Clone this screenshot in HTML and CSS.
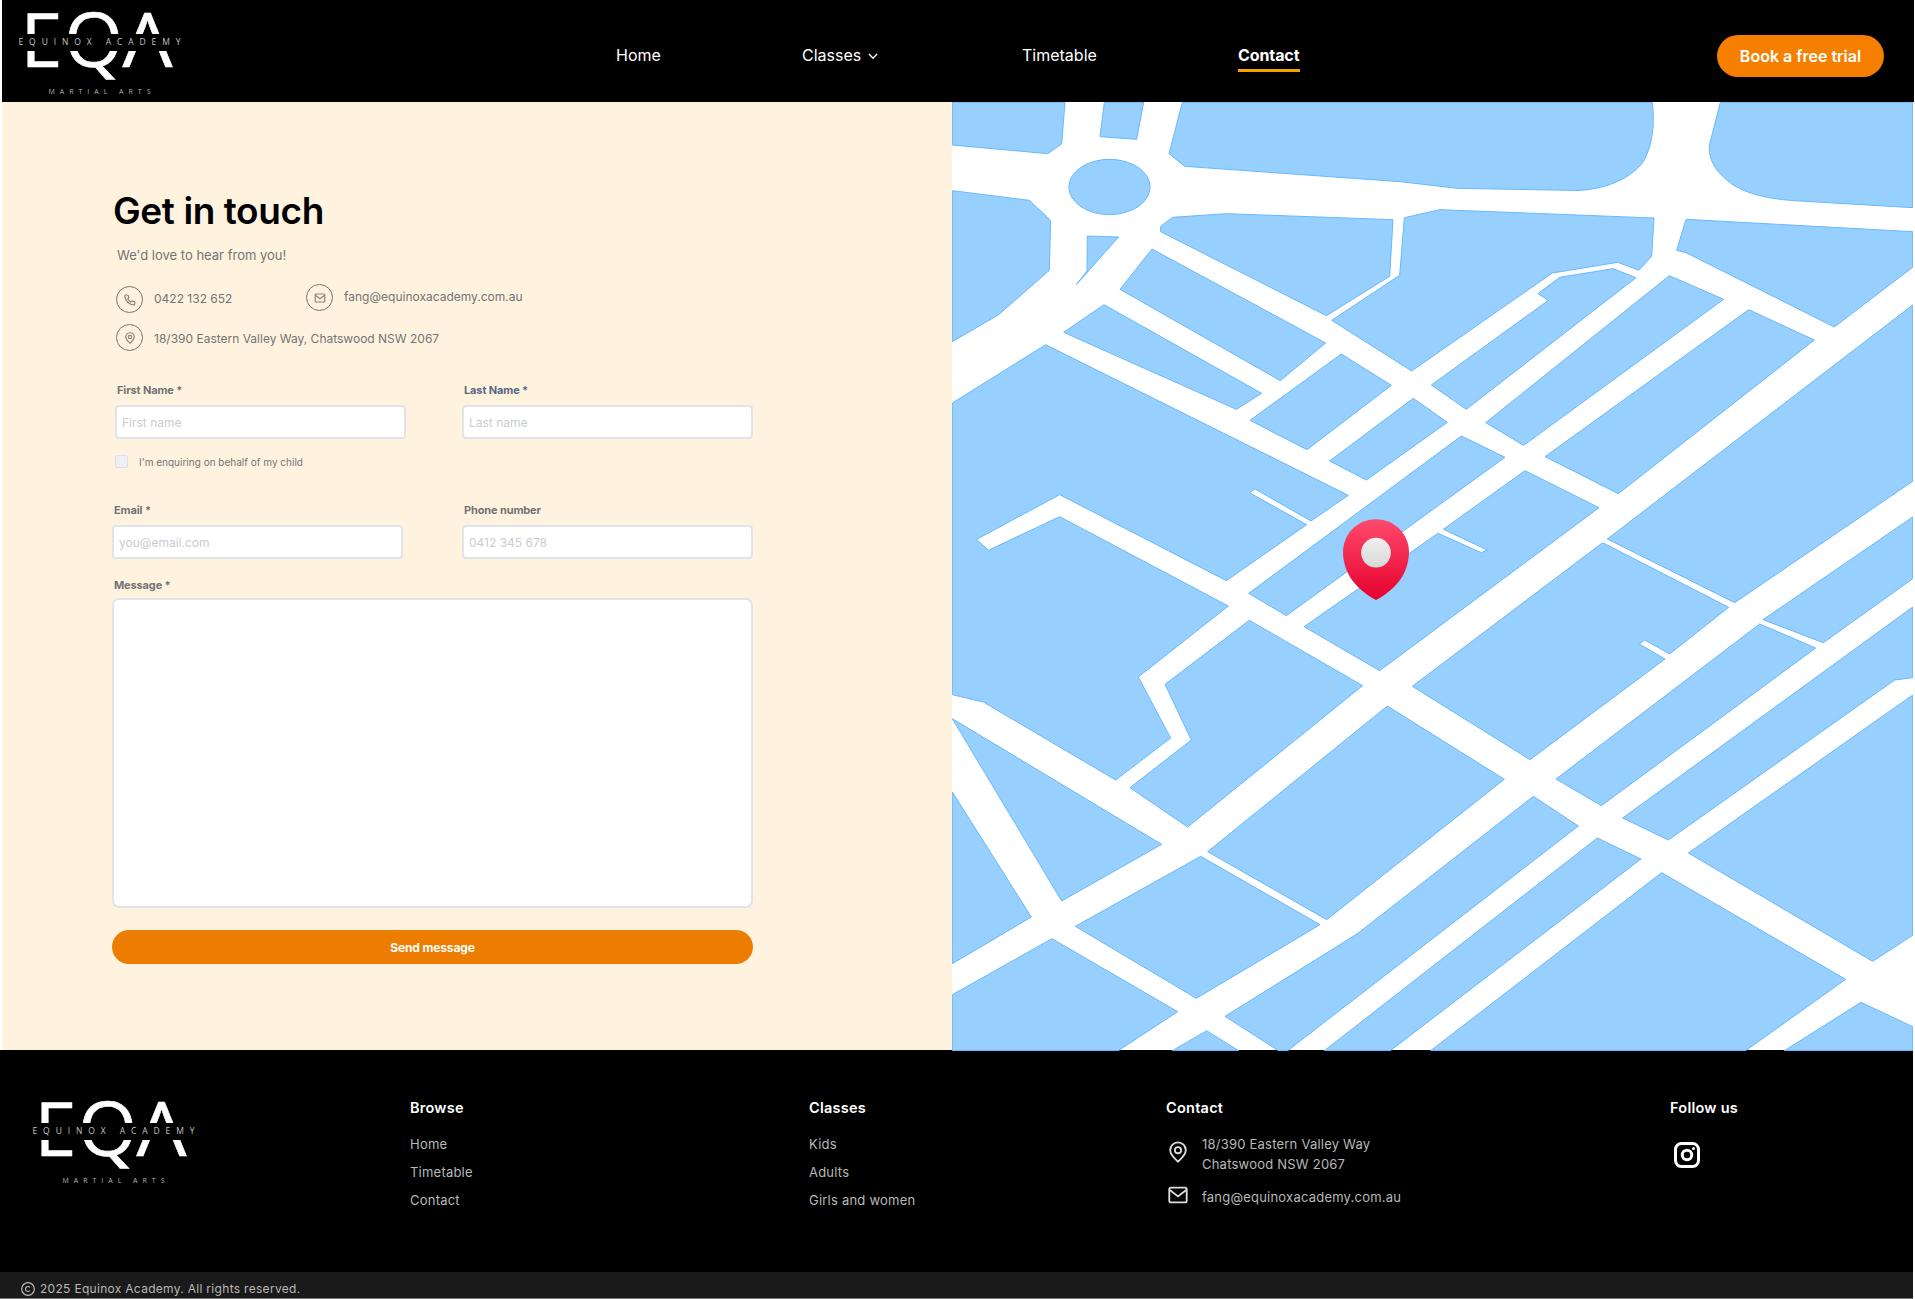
FILE: index.html
```html
<!DOCTYPE html>
<html lang="en">
<head>
<meta charset="utf-8">
<title>Contact | Equinox Academy</title>
<link rel="stylesheet" href="styles.css">
</head>
<body>
<svg class="defs" width="0" height="0" aria-hidden="true">
  <symbol id="logo" viewBox="0 0 184 100" overflow="visible">
    <g class="logo-big">
      <text x="20.5" y="67">E</text>
      <text x="64.3" y="67">Q</text>
      <text x="122.4" y="67" textLength="50" lengthAdjust="spacingAndGlyphs">A</text>
    </g>
    <rect class="logo-band" x="12" y="34" width="170" height="17"/>
    <text class="logo-name" x="18.5" y="45" textLength="162">EQUINOX ACADEMY</text>
    <text class="logo-sub" x="48.5" y="94" textLength="102">MARTIAL ARTS</text>
  </symbol>
  <symbol id="mail" viewBox="0 0 24 24"><rect x="2.5" y="4" width="19" height="16" rx="1.8"/><path d="M3 6.5l9 7 9-7"/></symbol>
  <symbol id="pin" viewBox="0 0 24 24"><path d="M12 22.5C8 18.500 3.500 15 3.500 10a8.500 8.500 0 0 1 17 0c0 5-4.500 8.500-8.500 12.500z"/><circle cx="12" cy="10" r="3.400"/></symbol>
</svg>

<header class="header">
  <svg class="header-logo"><use href="#logo"/></svg>
  <nav class="nav">
    <a>Home</a>
    <a>Classes <svg class="chevron" viewBox="0 0 10 7"><path d="M1 1l4 4.300L9 1"/></svg></a>
    <a>Timetable</a>
    <a class="active">Contact</a>
  </nav>
  <a class="trial">Book a free trial</a>
</header>

<main class="main">
  <section class="contact">
    <h1>Get in touch</h1>
    <p class="intro">We'd love to hear from you!</p>
    <div class="details">
      <div class="detail phone"><span class="ring"><svg viewBox="0 0 24 24"><path d="M21.500 16.900v3a2 2 0 0 1-2.200 2 19.800 19.800 0 0 1-8.600-3.100 19.500 19.500 0 0 1-6-6A19.800 19.800 0 0 1 1.600 4.200a2 2 0 0 1 2-2.200h3a2 2 0 0 1 2 1.700c.1 1 .4 1.900.7 2.800a2 2 0 0 1-.5 2.100L7.600 9.900a16 16 0 0 0 6 6l1.300-1.300a2 2 0 0 1 2.100-.4c.9.3 1.800.6 2.800.7a2 2 0 0 1 1.700 2z"/></svg></span><span>0422 132 652</span></div>
      <div class="detail email"><span class="ring"><svg><use href="#mail"/></svg></span><span>fang@equinoxacademy.com.au</span></div>
      <div class="detail address"><span class="ring"><svg><use href="#pin"/></svg></span><span>18/390 Eastern Valley Way, Chatswood NSW 2067</span></div>
    </div>
    <form class="form">
      <label class="field inset"><span>First Name *</span><input placeholder="First name"></label>
      <label class="field last"><span>Last Name *</span><input placeholder="Last name"></label>
      <label class="child"><span class="box"></span>I'm enquiring on behalf of my child</label>
      <label class="field"><span>Email *</span><input placeholder="you@email.com"></label>
      <label class="field"><span>Phone number</span><input placeholder="0412 345 678"></label>
      <label class="field message"><span>Message *</span><textarea></textarea></label>
      <button type="button" class="send">Send message</button>
    </form>
  </section>

  <svg class="map" viewBox="6 6 2883 2847">
    <defs>
      <linearGradient id="pinRed" x1="0" y1="0" x2="0" y2="1"><stop offset="0" stop-color="#ff4a6b"/><stop offset="1" stop-color="#e6002e"/></linearGradient>
      <linearGradient id="pinDot" x1="0" y1="0" x2="0" y2="1"><stop offset="0" stop-color="#efefef"/><stop offset="1" stop-color="#d9d9d9"/></linearGradient>
    </defs>
    <rect class="roads" x="6" y="6" width="2883" height="2844"/>
    <g class="blocks">
      <path d="M7 7H345L335 132 293 161 7 135Z"/>
      <path d="M463 7H581L560 118 450 110Z"/>
      <path d="M697 7H2107C2115 80 2107 135 2080 185C2040 240 1950 275 1860 271L1522 265 1350 245 704 199 657 161Z"/>
      <ellipse cx="478.500" cy="261" rx="122" ry="83"/>
      <path d="M7 272L238 301 302 361 298 511 146 644 7 725Z"/>
      <path d="M412 408L506 411 379 554 411 513Z"/>
      <path d="M632 379L668 352 829 341 1329 359 1319 529 1129 647 632 395Z"/>
      <path d="M606 447L1127 729 991 842 510 568Z"/>
      <path d="M462 614L935 880 859 928 341 697Z"/>
      <path d="M1363 353L1470 329 2112 354 2105 469 2067 511 2003 487 1807 519 1385 813 1145 661 1349 526Z"/>
      <path d="M1174 762L1324 856 1071 1049 900 961Z"/>
      <path d="M1390 895L1492 967 1249 1140 1139 1083Z"/>
      <path d="M1444 855L1795 601 1764 581 1829 532 1989 506 2058 533 1549 928Z"/>
      <path d="M2158 527L2321 598 1721 1036 1607 968Z"/>
      <path d="M2396 629L2593 720 2005 1181 1785 1070Z"/>
      <path d="M2311 7H2888V323L2550 303C2450 298 2390 280 2350 255C2300 220 2272 180 2279 132Z"/>
      <path d="M2208 358L2888 395V502L2653 681 2208 458 2180 451Z"/>
      <path d="M287 734L1195 1186 1083 1263 915 1167 898 1178 1070 1274 829 1442 329 1184 80 1318 115 1351 329 1250 835 1518 565 1731 662 1914 497 2040 100 1806 7 1784V909Z"/>
      <path d="M1534 1008L1665 1072 1009 1547 896 1480Z"/>
      <path d="M1725 1112L1947 1223 1289 1712 1062 1580 1464 1300 1594 1358 1612 1350 1480 1288Z"/>
      <path d="M2888 615V1144L2354 1508 1972 1317Z"/>
      <path d="M1958 1328L2336 1522 2159 1662 2084 1620 2068 1632 2145 1677 1740 1979 1387 1759Z"/>
      <path d="M898 1561L1238 1757 713 2181 540 2063 724 1920 645 1753Z"/>
      <path d="M1312 1818L1663 2038 1130 2459 773 2255Z"/>
      <path d="M7 1856L635 2233 335 2403Z"/>
      <path d="M7 2076L244 2451 7 2591Z"/>
      <path d="M752 2269L1110 2474 739 2695 376 2479Z"/>
      <path d="M306 2516L683 2735 505 2852H7V2684Z"/>
      <path d="M770 2792L866 2852H667Z"/>
      <path d="M1750 2089L1885 2178 1013 2852H985L825 2749 1221 2502Z"/>
      <path d="M1942 2214L2073 2277 1321 2852H1123Z"/>
      <path d="M2135 2318L2687 2638 2387 2852H1442Z"/>
      <path d="M2733 2707L2888 2780V2852H2503Z"/>
      <path d="M2888 1785V2506L2768 2584 2215 2259Z"/>
      <path d="M2429 1572L2597 1644 1954 2117 1818 2037Z"/>
      <path d="M2888 1521V1733L2834 1740 2155 2220 2018 2154Z"/>
      <path d="M2888 1251V1436L2620 1628 2439 1559Z"/>
    </g>
    <path fill="url(#pinRed)" d="M1278 1258C1222 1258 1179 1302 1179 1358C1181 1420 1216 1466 1278 1500C1340 1466 1375 1420 1377 1358C1377 1302 1334 1258 1278 1258Z"/>
    <circle fill="url(#pinDot)" cx="1278" cy="1358" r="44.500"/>
  </svg>
</main>

<footer class="footer">
  <div class="footer-main">
    <svg class="footer-logo"><use href="#logo"/></svg>
    <div class="col"><h2>Browse</h2><a>Home</a><a>Timetable</a><a>Contact</a></div>
    <div class="col"><h2>Classes</h2><a>Kids</a><a>Adults</a><a>Girls and women</a></div>
    <div class="col">
      <h2>Contact</h2>
      <div class="place"><svg><use href="#pin"/></svg><address>18/390 Eastern Valley Way<br>Chatswood NSW 2067</address></div>
      <div class="place mailto"><svg><use href="#mail"/></svg><a>fang@equinoxacademy.com.au</a></div>
    </div>
    <div class="col social">
      <h2>Follow us</h2>
      <svg class="instagram" viewBox="0 0 26 26"><rect x="1.500" y="1.500" width="23" height="23" rx="6"/><circle cx="13" cy="13" r="4.700"/><circle class="dot" cx="19.500" cy="6.500" r="1.500"/></svg>
    </div>
  </div>
  <div class="legal">
    <svg class="copy" viewBox="0 0 14 14"><circle cx="7" cy="7" r="6.300"/><path d="M9 5.500a2.500 2.500 0 1 0 0 3"/></svg>
    <span>2025 Equinox Academy. All rights reserved.</span>
  </div>
</footer>
</body>
</html>
```
FILE: styles.css
```css
* { box-sizing: border-box; }
body {
  margin: 0;
  background: #fff;
  font-family: Inter, "Liberation Sans", sans-serif;
  color: #737373;
  overflow: hidden;
}
h1, h2, p { margin: 0; }
svg { flex: none; display: block; }
.defs { position: absolute; }

/* Logo */
.logo-big { font: 400 75.500px "Open Sans", "Noto Sans", sans-serif; fill: #fff; stroke: #fff; stroke-width: 0.6; }
.logo-band { fill: #000; }
.logo-name { font: 400 8.500px "Open Sans", sans-serif; fill: #c4c4c4; }
.logo-sub { font: 400 7px "Open Sans", sans-serif; fill: #b4b4b4; }

/* Header */
.header {
  display: flex;
  align-items: center;
  height: 102px;
  margin: 0 1px 0 2px;
  background: #000;
}
.header-logo { width: 184px; height: 100px; margin-left: -2px; align-self: flex-start; overflow: visible; }
.nav {
  display: grid;
  grid-template-columns: 186px 220px 216px auto;
  margin: 12px 0 0 432px;
  color: #fff;
  font-size: 16px;
  line-height: 24px;
}
.nav a { display: flex; height: 29px; align-items: flex-start; }
.nav .active { width: 62px; font-weight: 700; letter-spacing: -0.1px; border-bottom: 3px solid #f6a200; }
.chevron { width: 10px; height: 7px; margin: 10px 0 0 7px; fill: none; stroke: #fff; stroke-width: 1.4; }
.trial {
  display: flex;
  align-items: center;
  justify-content: center;
  width: 167px;
  height: 42px;
  margin: 10px 30px 0 auto;
  border-radius: 21px;
  background: #f77f00;
  color: #fff;
  font-weight: 600;
  font-size: 16px;
}

/* Contact panel */
.main {
  display: flex;
  height: 948px;
  margin-left: 2px;
}
.contact {
  width: 950px;
  padding: 86px 0 0 110px;
  background: #fff3e0;
}
h1 {
  padding: 1px 0 0 1px;
  color: #000;
  font-size: 37px;
  line-height: 43px;
  font-weight: 600;
  letter-spacing: -0.4px;
}
.intro { margin: 13px 0 19px 5px; font-size: 13px; line-height: 20px; }
.details {
  display: grid;
  grid-template-columns: 190px auto;
  row-gap: 11px;
  margin: 0 0 33px 4px;
  padding-top: 2px;
  font-size: 12px;
}
.detail { display: flex; gap: 11px; height: 27px; line-height: 26px; }
.email { margin-top: -2px; }
.address { grid-column: 1 / 3; line-height: 29px; }
.ring {
  display: grid;
  place-items: center;
  width: 27px;
  height: 27px;
  border: 1px solid #7c7166;
  border-radius: 50%;
}
.ring svg { width: 12px; height: 12px; fill: none; stroke: #8d857a; stroke-width: 2.4; }

.form {
  display: grid;
  grid-template-columns: 291px 291px;
  column-gap: 59px;
  width: 641px;
}
.field { display: grid; gap: 9px; font-size: 11px; line-height: 12px; font-weight: 700; letter-spacing: -0.13px; }
.field span { padding-left: 2px; }
.inset { margin: 0 -3px 0 3px; }
.last span { color: #5a6785; }
input, textarea {
  display: block;
  width: 100%;
  height: 34px;
  padding: 0 5px;
  border: 2px solid #dfe3ea;
  border-radius: 4px;
  background: #fff;
  font: 400 12px Inter, sans-serif;
}
input::placeholder { color: #c9ccd3; opacity: 1; }
.child {
  display: flex;
  grid-column: 1 / 3;
  gap: 11px;
  margin: 15px 0 34px 3px;
  font-size: 10px;
  line-height: 16px;
}
.box { width: 13px; height: 13px; margin-top: 1px; border: 1px solid #dcdfe9; border-radius: 2px; background: #eff0f6; }
.message { grid-column: 1 / 3; gap: 7px; margin-top: 20px; }
textarea { height: 310px; border-radius: 7px; resize: none; }
.send {
  grid-column: 1 / 3;
  height: 34px;
  margin-top: 22px;
  border: 0;
  border-radius: 17px;
  background: #ed7d00;
  color: #fff;
  font: 700 12px Inter, sans-serif;
  letter-spacing: -0.15px;
}

/* Map */
.map { position: relative; width: 961px; height: 949px; }
.roads { fill: #fff; }
.blocks { fill: #97d0ff; stroke: #69b8fb; stroke-width: 3; }

/* Footer */
.footer { width: 1913px; background: #000; color: #b8b8b8; }
.footer-main {
  display: grid;
  grid-template-columns: 396px 399px 357px 504px auto;
  height: 222px;
  padding-left: 14px;
}
.footer-logo { width: 184px; height: 100px; margin-top: 39px; overflow: visible; }
.col { padding-top: 48px; font-size: 13px; letter-spacing: 0.22px; }
h2 { margin-bottom: 16px; color: #fff; font-size: 14.500px; line-height: 20px; font-weight: 600; letter-spacing: 0.25px; }
.col > a { display: block; height: 28px; line-height: 20px; }
.place { display: flex; gap: 13px; line-height: 20px; }
.place svg { width: 22px; height: 22px; margin: 7px 0 0 1px; fill: none; stroke: #ddd; stroke-width: 2; }
.place address { font-style: normal; }
.mailto { margin-top: 13px; }
.mailto svg { margin-top: -3px; }
.instagram { width: 26px; height: 26px; margin: 24px 0 0 4px; fill: none; stroke: #fff; stroke-width: 3; }
.instagram .dot { fill: #fff; stroke: none; }
.legal {
  display: flex;
  gap: 5px;
  height: 27px;
  padding: 7px 0 0 21px;
  border-bottom: 1px solid #777;
  background: #1a1a1a;
  font-size: 12px;
  line-height: 19px;
  letter-spacing: 0.3px;
}
.copy { width: 14px; height: 14px; margin-top: 3px; fill: none; stroke: #b8b8b8; stroke-width: 1.2; }
```
